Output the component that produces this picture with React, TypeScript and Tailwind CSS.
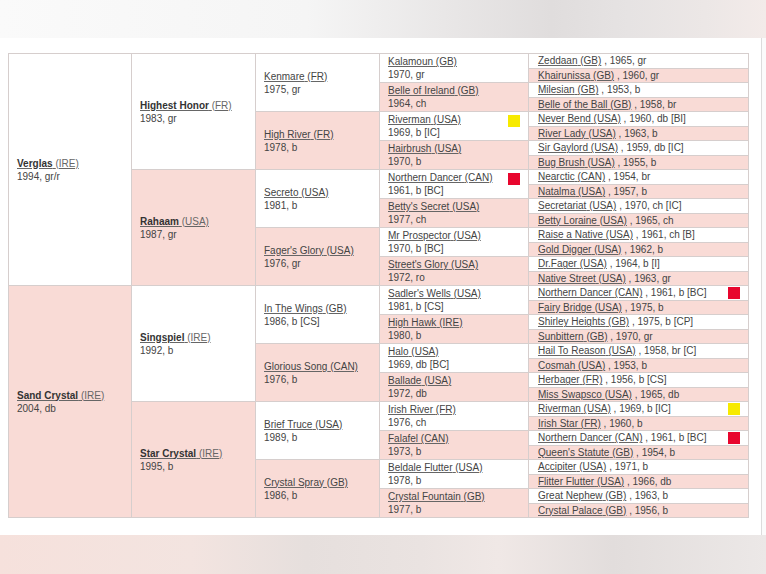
type Horse = {
  name: string;
  country: string;
  info: string;
  mark?: "red" | "yellow";
};

const gen1: Horse[] = [
  { name: "Verglas", country: "(IRE)", info: "1994, gr/r" },
  { name: "Sand Crystal", country: "(IRE)", info: "2004, db" },
];

const gen2: Horse[] = [
  { name: "Highest Honor", country: "(FR)", info: "1983, gr" },
  { name: "Rahaam", country: "(USA)", info: "1987, gr" },
  { name: "Singspiel", country: "(IRE)", info: "1992, b" },
  { name: "Star Crystal", country: "(IRE)", info: "1995, b" },
];

const gen3: Horse[] = [
  { name: "Kenmare", country: "(FR)", info: "1975, gr" },
  { name: "High River", country: "(FR)", info: "1978, b" },
  { name: "Secreto", country: "(USA)", info: "1981, b" },
  { name: "Fager's Glory", country: "(USA)", info: "1976, gr" },
  { name: "In The Wings", country: "(GB)", info: "1986, b [CS]" },
  { name: "Glorious Song", country: "(CAN)", info: "1976, b" },
  { name: "Brief Truce", country: "(USA)", info: "1989, b" },
  { name: "Crystal Spray", country: "(GB)", info: "1986, b" },
];

const gen4: Horse[] = [
  { name: "Kalamoun", country: "(GB)", info: "1970, gr" },
  { name: "Belle of Ireland", country: "(GB)", info: "1964, ch" },
  { name: "Riverman", country: "(USA)", info: "1969, b [IC]", mark: "yellow" },
  { name: "Hairbrush", country: "(USA)", info: "1970, b" },
  { name: "Northern Dancer", country: "(CAN)", info: "1961, b [BC]", mark: "red" },
  { name: "Betty's Secret", country: "(USA)", info: "1977, ch" },
  { name: "Mr Prospector", country: "(USA)", info: "1970, b [BC]" },
  { name: "Street's Glory", country: "(USA)", info: "1972, ro" },
  { name: "Sadler's Wells", country: "(USA)", info: "1981, b [CS]" },
  { name: "High Hawk", country: "(IRE)", info: "1980, b" },
  { name: "Halo", country: "(USA)", info: "1969, db [BC]" },
  { name: "Ballade", country: "(USA)", info: "1972, db" },
  { name: "Irish River", country: "(FR)", info: "1976, ch" },
  { name: "Falafel", country: "(CAN)", info: "1973, b" },
  { name: "Beldale Flutter", country: "(USA)", info: "1978, b" },
  { name: "Crystal Fountain", country: "(GB)", info: "1977, b" },
];

const gen5: Horse[] = [
  { name: "Zeddaan", country: "(GB)", info: "1965, gr" },
  { name: "Khairunissa", country: "(GB)", info: "1960, gr" },
  { name: "Milesian", country: "(GB)", info: "1953, b" },
  { name: "Belle of the Ball", country: "(GB)", info: "1958, br" },
  { name: "Never Bend", country: "(USA)", info: "1960, db [BI]" },
  { name: "River Lady", country: "(USA)", info: "1963, b" },
  { name: "Sir Gaylord", country: "(USA)", info: "1959, db [IC]" },
  { name: "Bug Brush", country: "(USA)", info: "1955, b" },
  { name: "Nearctic", country: "(CAN)", info: "1954, br" },
  { name: "Natalma", country: "(USA)", info: "1957, b" },
  { name: "Secretariat", country: "(USA)", info: "1970, ch [IC]" },
  { name: "Betty Loraine", country: "(USA)", info: "1965, ch" },
  { name: "Raise a Native", country: "(USA)", info: "1961, ch [B]" },
  { name: "Gold Digger", country: "(USA)", info: "1962, b" },
  { name: "Dr.Fager", country: "(USA)", info: "1964, b [I]" },
  { name: "Native Street", country: "(USA)", info: "1963, gr" },
  { name: "Northern Dancer", country: "(CAN)", info: "1961, b [BC]", mark: "red" },
  { name: "Fairy Bridge", country: "(USA)", info: "1975, b" },
  { name: "Shirley Heights", country: "(GB)", info: "1975, b [CP]" },
  { name: "Sunbittern", country: "(GB)", info: "1970, gr" },
  { name: "Hail To Reason", country: "(USA)", info: "1958, br [C]" },
  { name: "Cosmah", country: "(USA)", info: "1953, b" },
  { name: "Herbager", country: "(FR)", info: "1956, b [CS]" },
  { name: "Miss Swapsco", country: "(USA)", info: "1965, db" },
  { name: "Riverman", country: "(USA)", info: "1969, b [IC]", mark: "yellow" },
  { name: "Irish Star", country: "(FR)", info: "1960, b" },
  { name: "Northern Dancer", country: "(CAN)", info: "1961, b [BC]", mark: "red" },
  { name: "Queen's Statute", country: "(GB)", info: "1954, b" },
  { name: "Accipiter", country: "(USA)", info: "1971, b" },
  { name: "Flitter Flutter", country: "(USA)", info: "1966, db" },
  { name: "Great Nephew", country: "(GB)", info: "1963, b" },
  { name: "Crystal Palace", country: "(GB)", info: "1956, b" },
];

function Mark({ color }: { color?: "red" | "yellow" }) {
  if (!color) return null;
  return (
    <span
      className={
        color === "red"
          ? "h-[12px] w-[12px] shrink-0 bg-[#e8062e]"
          : "h-[12px] w-[12px] shrink-0 bg-[#f7ea00]"
      }
    />
  );
}

function cellBg(i: number) {
  return i % 2 === 0 ? "bg-white" : "bg-[#f9dbd6]";
}

function BigCell({ horse, index, bold }: { horse: Horse; index: number; bold?: boolean }) {
  return (
    <div className={"flex flex-1 flex-col justify-center pl-[8px] " + cellBg(index)}>
      <div className="underline decoration-[#666] underline-offset-[1px]">
        <span className={bold ? "font-bold text-[#333]" : "text-[#444]"}>{horse.name}</span>{" "}
        <span className={bold ? "text-[#666]" : "text-[#444]"}>{horse.country}</span>
      </div>
      <div className="text-[#444]">{horse.info}</div>
    </div>
  );
}

function Gen4Cell({ horse, index }: { horse: Horse; index: number }) {
  return (
    <div className={"flex flex-1 items-center justify-between pr-[8px] pl-[8px] " + cellBg(index)}>
      <div className="flex flex-col">
        <span className="underline decoration-[#666] underline-offset-[1px]">
          {horse.name} {horse.country}
        </span>
        <span>{horse.info}</span>
      </div>
      <div className="flex h-full items-start pt-[3px]">
        <Mark color={horse.mark} />
      </div>
    </div>
  );
}

function Gen5Cell({ horse, index }: { horse: Horse; index: number }) {
  return (
    <div className={"flex flex-1 items-center justify-between pr-[8px] pl-[9px] " + cellBg(index)}>
      <div className="whitespace-nowrap">
        <span className="underline decoration-[#666] underline-offset-[1px]">
          {horse.name} {horse.country}
        </span>{" "}
        , {horse.info}
      </div>
      <Mark color={horse.mark} />
    </div>
  );
}

export default function App() {
  return (
    <div className="flex h-[574px] w-[766px] flex-col overflow-hidden bg-white font-['Liberation_Sans',Arial,sans-serif] text-[10px] leading-[13px] text-[#444]">
      <div className="h-[38px] shrink-0 bg-[linear-gradient(90deg,#fafafa_0%,#f5f5f5_40%,#e9e7e7_58%,#e0dddd_72%,#e6e3e3_82%,#ece7e6_92%,#f3ebe9_100%)]" />
      <div className="flex h-[497px] shrink-0">
        <div className="w-[762px] border-r border-[#dcdcdc] bg-white pt-[15px] pl-[8px]">
          <div className="grid h-[465px] w-[741px] grid-cols-[122px_123px_123px_148px_1fr] gap-px bg-[#d6cecd] p-px">
            <div className="flex flex-col gap-px">
              {gen1.map((h, i) => (
                <BigCell key={i} horse={h} index={i} bold />
              ))}
            </div>
            <div className="flex flex-col gap-px">
              {gen2.map((h, i) => (
                <BigCell key={i} horse={h} index={i} bold />
              ))}
            </div>
            <div className="flex flex-col gap-px">
              {gen3.map((h, i) => (
                <BigCell key={i} horse={h} index={i} />
              ))}
            </div>
            <div className="flex flex-col gap-px">
              {gen4.map((h, i) => (
                <Gen4Cell key={i} horse={h} index={i} />
              ))}
            </div>
            <div className="flex flex-col gap-px">
              {gen5.map((h, i) => (
                <Gen5Cell key={i} horse={h} index={i} />
              ))}
            </div>
          </div>
        </div>
        <div className="flex-1 bg-[#fbfbfb]" />
      </div>
      <div className="flex-1 bg-[linear-gradient(90deg,#f6e1dc_0%,#f3e4e0_25%,#e6dfdd_40%,#eae3e1_55%,#f0e8e6_65%,#e2dddc_80%,#ece8e7_100%)]" />
    </div>
  );
}
